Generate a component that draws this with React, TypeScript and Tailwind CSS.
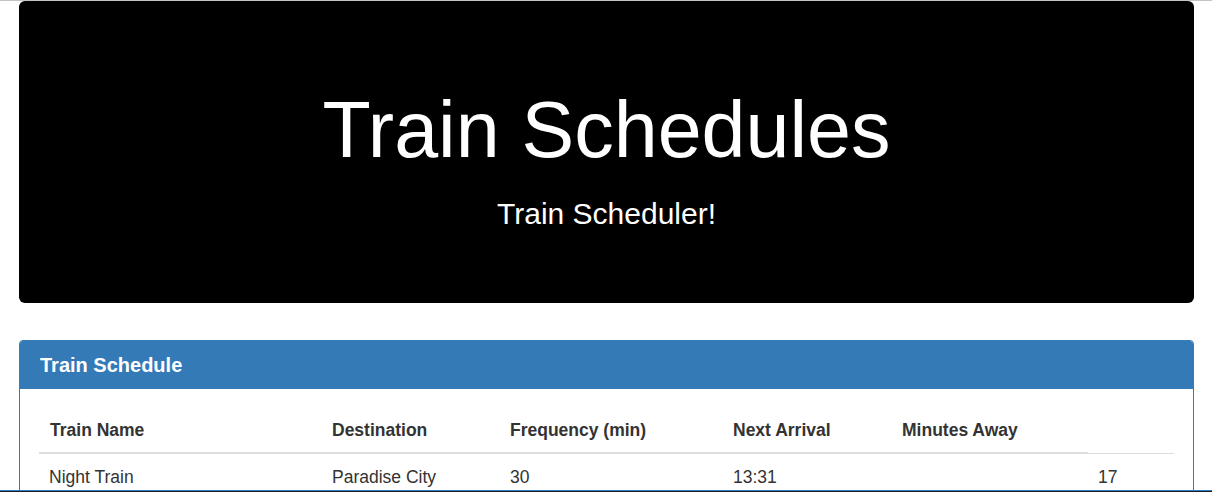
import React from "react";

export default function App() {
  const font = { fontFamily: '"Liberation Sans", Arial, sans-serif' };
  return (
    <div className="min-h-[492px] bg-white text-[#333]" style={font}>
      <div className="h-px bg-[#c4c4c4]" />
      <div className="ml-[19px] w-[1175px] h-[302px] rounded-[6px] bg-black text-white flex flex-col items-center pt-[86px]">
        <h1 className="text-[79px] leading-[1.1] font-normal">Train Schedules</h1>
        <p className="mt-[19px] text-[30px] leading-[42px]">Train Scheduler!</p>
      </div>
      <div className="ml-[19px] mt-[37px] w-[1175px] rounded-[4px] border border-[#337ab7] bg-white">
        <div className="bg-[#337ab7] text-white px-[20px] py-[13px] rounded-t-[3px]">
          <h3 className="text-[20px] leading-[22px] font-bold">Train Schedule</h3>
        </div>
        <div className="px-[19px] pt-[19px] pb-[20px]">
          <table className="w-[1135px] border-collapse text-[17.5px] leading-[24px]">
            <colgroup>
              <col className="w-[283px]" />
              <col className="w-[178px]" />
              <col className="w-[223px]" />
              <col className="w-[169px]" />
              <col className="w-[196px]" />
              <col className="w-[86px]" />
            </colgroup>
            <thead>
              <tr>
                <th className="text-left font-bold px-[11px] py-[10px] border-b-2 border-[#ddd]">Train Name</th>
                <th className="text-left font-bold px-[10px] py-[10px] border-b-2 border-[#ddd]">Destination</th>
                <th className="text-left font-bold px-[10px] py-[10px] border-b-2 border-[#ddd]">Frequency (min)</th>
                <th className="text-left font-bold px-[10px] py-[10px] border-b-2 border-[#ddd]">Next Arrival</th>
                <th className="text-left font-bold px-[10px] py-[10px] border-b-2 border-[#ddd]">Minutes Away</th>
              </tr>
            </thead>
            <tbody>
              <tr>
                <td className="px-[10px] pt-[11px] pb-[10px] border-t border-[#ddd]">Night Train</td>
                <td className="px-[10px] pt-[11px] pb-[10px] border-t border-[#ddd]">Paradise City</td>
                <td className="px-[10px] pt-[11px] pb-[10px] border-t border-[#ddd]">30</td>
                <td className="px-[10px] pt-[11px] pb-[10px] border-t border-[#ddd]">13:31</td>
                <td className="px-[10px] pt-[11px] pb-[10px] border-t border-[#ddd]"></td>
                <td className="px-[10px] pt-[11px] pb-[10px] border-t border-[#ddd]">17</td>
              </tr>
            </tbody>
          </table>
        </div>
      </div>
      <div className="fixed left-0 right-0 bottom-0 h-[2px] bg-[#1c1c1c] border-t border-[#2b7fd4]" />
    </div>
  );
}
